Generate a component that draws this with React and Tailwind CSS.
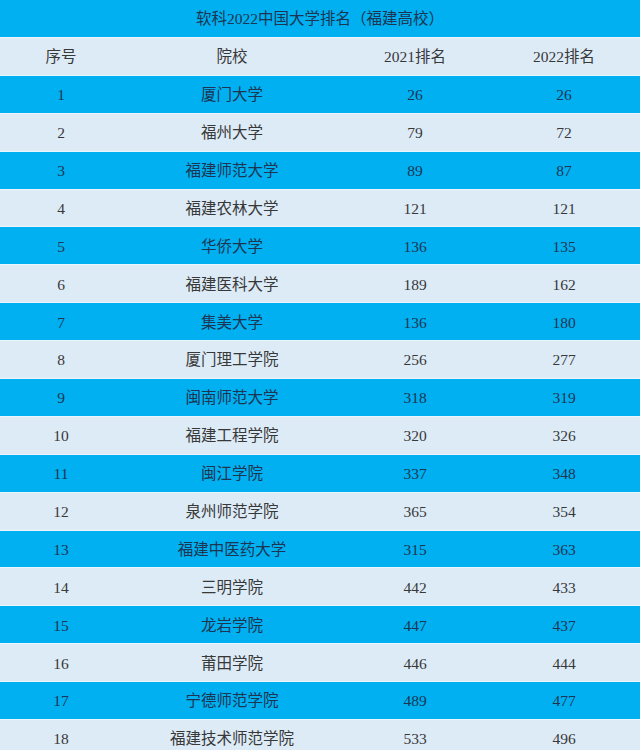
const rows = [
  [1, "厦门大学", 26, 26],
  [2, "福州大学", 79, 72],
  [3, "福建师范大学", 89, 87],
  [4, "福建农林大学", 121, 121],
  [5, "华侨大学", 136, 135],
  [6, "福建医科大学", 189, 162],
  [7, "集美大学", 136, 180],
  [8, "厦门理工学院", 256, 277],
  [9, "闽南师范大学", 318, 319],
  [10, "福建工程学院", 320, 326],
  [11, "闽江学院", 337, 348],
  [12, "泉州师范学院", 365, 354],
  [13, "福建中医药大学", 315, 363],
  [14, "三明学院", 442, 433],
  [15, "龙岩学院", 447, 437],
  [16, "莆田学院", 446, 444],
  [17, "宁德师范学院", 489, 477],
  [18, "福建技术师范学院", 533, 496],
];

const font = { fontFamily: '"Liberation Serif", "Noto Sans CJK SC", serif' };

function Row({ cells, blue }) {
  return (
    <div
      className={
        "flex h-[37.9px] items-center border-t border-[#eaf5fc] pt-[1px] text-[15.5px] " +
        (blue ? "bg-[#00b0f0] text-[#1c3553]" : "bg-[#ddebf7] text-[#383838]")
      }
    >
      <div className="w-[122px] text-center">{cells[0]}</div>
      <div className="w-[220px] text-center">{cells[1]}</div>
      <div className="w-[146px] text-center">{cells[2]}</div>
      <div className="w-[152px] text-center">{cells[3]}</div>
    </div>
  );
}

export default function App() {
  return (
    <div className="w-[640px] h-[750px] overflow-hidden bg-[#ddebf7]" style={font}>
      <div className="flex h-[37px] items-center justify-center bg-[#00b0f0] pt-[1px] text-[15.5px] text-[#1c3553]">
        软科2022中国大学排名（福建高校）
      </div>
      <Row cells={["序号", "院校", "2021排名", "2022排名"]} blue={false} />
      {rows.map((r, i) => (
        <Row key={r[0]} cells={r} blue={i % 2 === 0} />
      ))}
    </div>
  );
}
